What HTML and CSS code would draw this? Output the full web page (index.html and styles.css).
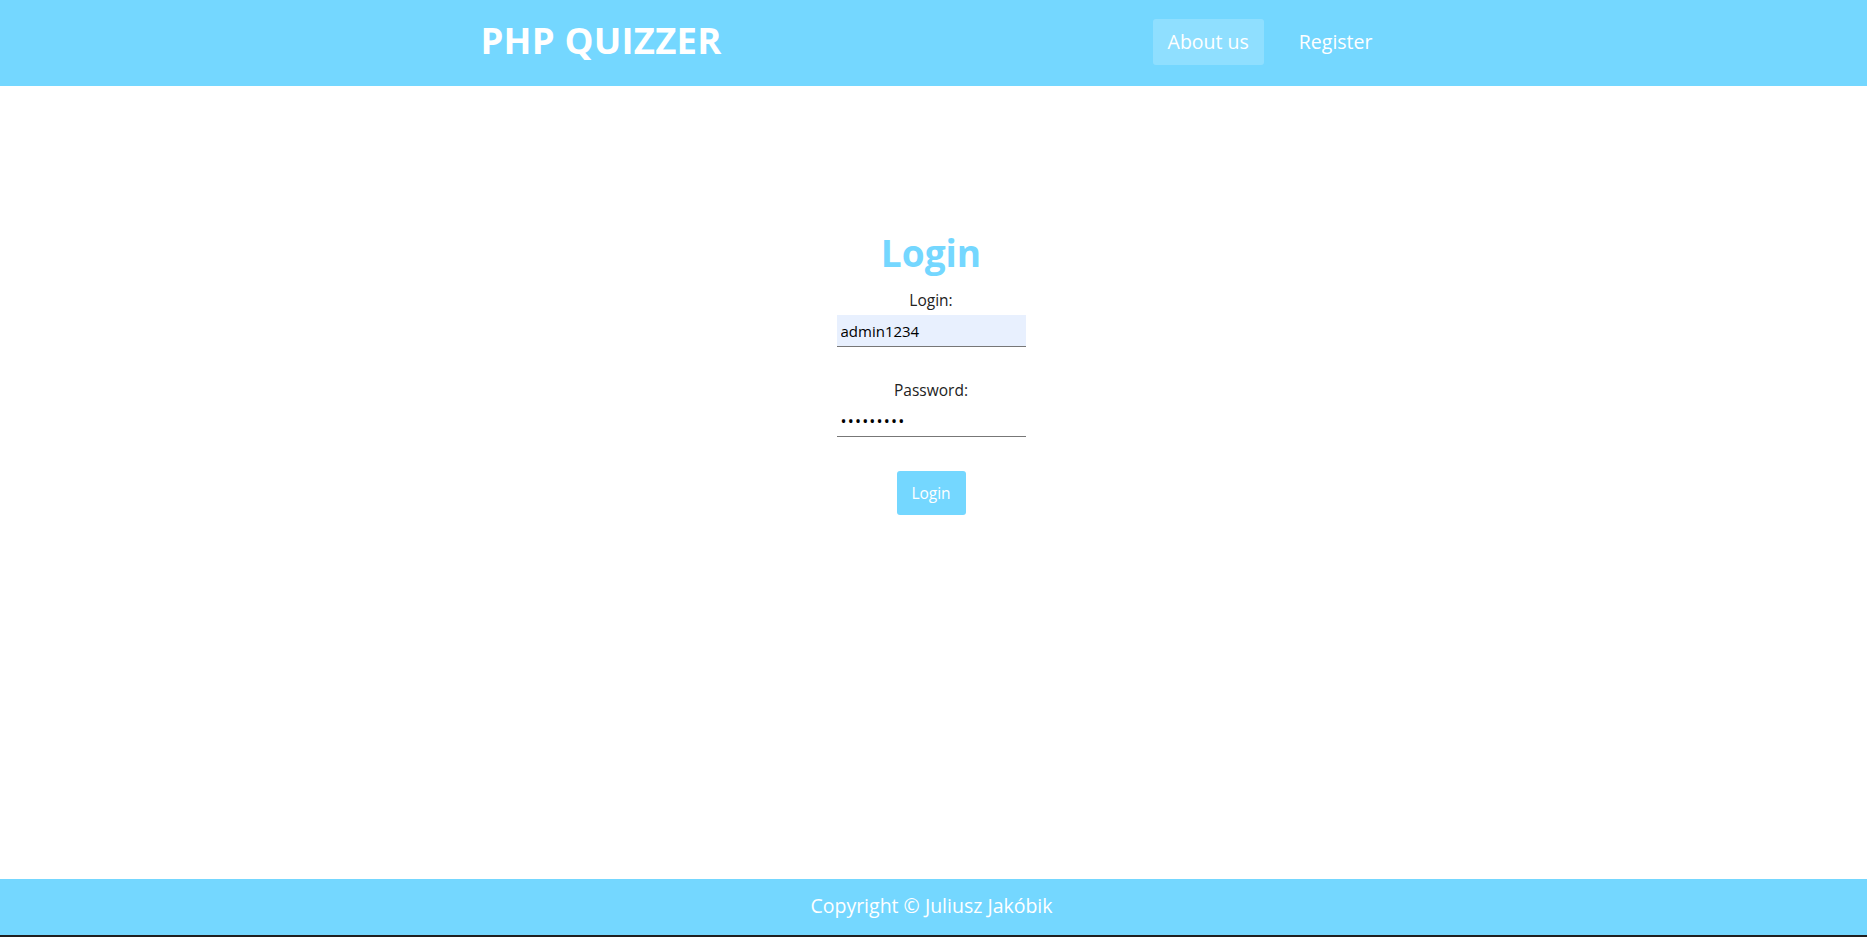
FILE: index.html
```html
<!DOCTYPE html>
<html lang="en">
<head>
<meta charset="utf-8">
<title>PHP Quizzer - Login</title>
<link rel="stylesheet" href="styles.css">
</head>
<body>
<div class="page">
  <header class="header">
    <div class="header-inner">
      <div class="logo">PHP QUIZZER</div>
      <nav class="nav">
        <a class="nav-link active" href="#">About us</a>
        <a class="nav-link" href="#">Register</a>
      </nav>
    </div>
  </header>
  <main class="main">
    <form class="login-form">
      <h1 class="title">Login</h1>
      <label class="field-label" for="login">Login:</label>
      <input class="field-input autofill" id="login" type="text" value="admin1234">
      <label class="field-label" for="password">Password:</label>
      <input class="field-input password" id="password" type="password" value="admin1234">
      <button class="btn" type="button">Login</button>
    </form>
  </main>
  <footer class="footer">Copyright © Juliusz Jakóbik</footer>
  <div class="taskbar"></div>
</div>
</body>
</html>
```

FILE: styles.css
```css
* { box-sizing: border-box; }
html, body { margin: 0; padding: 0; }
body {
  font-family: "Open Sans", "Noto Sans", sans-serif;
  background: #ffffff;
  color: #222;
}
.page {
  display: flex;
  flex-direction: column;
  height: 937px;
}
.header {
  background: #74d7ff;
  height: 86px;
  flex: none;
}
.header-inner {
  width: 960px;
  margin: 0 auto;
  height: 100%;
  display: flex;
  align-items: center;
  justify-content: space-between;
  padding: 0 26px 0 27px;
}
.logo {
  color: #fff;
  font-weight: 700;
  font-size: 36.5px;
  letter-spacing: 0.2px;
  margin-top: -7px;
}
.nav {
  display: flex;
  gap: 20px;
  margin-top: -2px;
}
.nav-link {
  color: #fff;
  text-decoration: none;
  font-size: 19.5px;
  height: 46px;
  line-height: 46px;
  padding: 0 15px;
  border-radius: 3px;
}
.nav-link.active {
  background: rgba(255,255,255,0.2);
}
.main {
  flex: 1;
  display: flex;
  justify-content: center;
  padding: 142px 5px 0 0;
}
.login-form {
  display: flex;
  flex-direction: column;
  align-items: center;
  width: 189px;
}
.title {
  margin: 0 0 12px;
  color: #74d7ff;
  font-size: 37px;
  font-weight: 700;
  line-height: 50px;
}
.field-label {
  font-size: 15.5px;
  color: #222;
  line-height: 20px;
  margin-bottom: 5px;
}
.field-input {
  width: 189px;
  height: 32px;
  border: none;
  border-bottom: 1px solid #777;
  background: transparent;
  font-family: "Open Sans", "Noto Sans", sans-serif;
  font-size: 15px;
  color: #000;
  padding: 0 4px;
  margin-bottom: 33px;
  outline: none;
}
.field-input.autofill {
  background: #e8f0fe;
}
.field-input.password {
  font-size: 16px;
  letter-spacing: 1.2px;
}
.btn {
  margin-top: 1px;
  width: 69px;
  height: 44px;
  border: none;
  border-radius: 3px;
  background: #74d7ff;
  color: #fff;
  font-family: "Open Sans", "Noto Sans", sans-serif;
  font-size: 15.5px;
}
.footer {
  flex: none;
  height: 56px;
  background: #74d7ff;
  color: #fff;
  font-size: 19.5px;
  display: flex;
  align-items: center;
  justify-content: center;
  padding: 0 4px 3px 0;
}
.taskbar {
  flex: none;
  height: 2px;
  background: #202020;
}
```
